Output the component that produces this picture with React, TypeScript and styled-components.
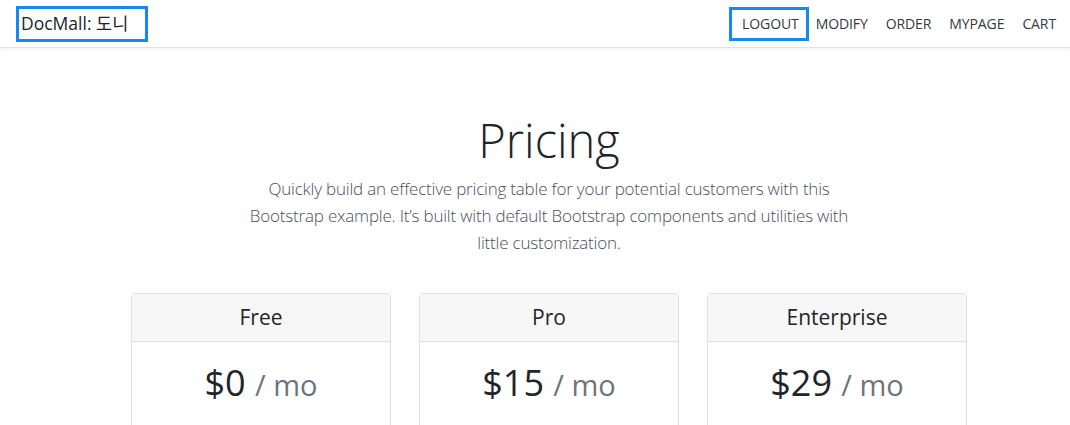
import React from "react";
import styled, {createGlobalStyle} from "styled-components";

let Global = createGlobalStyle`
  html, body {
    margin: 0;
    padding: 0;
    background: #fff;
    font-family: "Open Sans", "Noto Sans", "Noto Sans CJK KR", sans-serif;
    font-size: 14px;
    color: #212529;
    overflow: hidden;
  }
  * { box-sizing: border-box; }
`;

let Header = styled.header`
  display: flex;
  align-items: center;
  height: 48px;
  padding: 0 6px 0 16px;
  border-bottom: 1px solid #e3e3e3;
  box-shadow: 0 2px 3px rgba(0, 0, 0, 0.05);
  background: #fff;
`;
let Brand = styled.h5`
  margin: 0 auto 0 0;
  padding: 1px 17px 2px 2px;
  border: 3px solid #1589f0;
  font-size: 17.5px;
  font-weight: 400;
  line-height: 27px;
  color: #212529;
`;
let Nav = styled.nav`
  display: flex;
  align-items: center;
  gap: 2px;
`;
let NavLink = styled.a<{ boxed?: boolean }>`
  display: block;
  padding: ${p => p.boxed ? "5px 7px 5px 10px" : "7px 8px"};
  font-size: 14px;
  line-height: 18px;
  letter-spacing: -0.1px;
  color: #343a40;
  text-decoration: none;
  ${p => p.boxed ? "border: 3px solid #1589f0; margin-right: -3px;" : ""}
`;

let PricingHeader = styled.div`
  max-width: 610px;
  margin: 0 auto;
  padding: 64px 0 37px;
  text-align: center;
  transform: translateX(14px);
`;
let Title = styled.h1`
  margin: 0 0 7px;
  font-size: 47px;
  font-weight: 300;
  line-height: 1.2;
  color: #212529;
`;
let Lead = styled.p`
  margin: 0;
  font-size: 17px;
  font-weight: 300;
  line-height: 27px;
  letter-spacing: -0.2px;
  color: #4c4f5c;
`;

let Deck = styled.div`
  display: grid;
  grid-template-columns: repeat(3, 260px);
  gap: 28px;
  justify-content: center;
  transform: translateX(14px);
`;
let Card = styled.div`
  border: 1px solid #dfdfdf;
  border-radius: 4px;
  background: #fff;
  text-align: center;
  overflow: hidden;
`;
let CardHeader = styled.div`
  height: 48px;
  display: flex;
  align-items: center;
  justify-content: center;
  background: #f7f7f7;
  border-bottom: 1px solid #dfdfdf;
`;
let CardTitle = styled.h4`
  margin: 0;
  font-size: 21px;
  font-weight: 400;
  line-height: 25px;
`;
let CardBody = styled.div`
  padding: 19px 20px 20px;
`;
let Price = styled.h1`
  margin: 0;
  font-size: 36px;
  font-weight: 500;
  line-height: 1.2;
  color: #212529;
`;
let Per = styled.small`
  font-size: 29px;
  font-weight: 400;
  color: #6c757d;
`;
let Features = styled.ul`
  list-style: none;
  margin: 15px 0 0;
  padding: 0;
  font-size: 14px;
  line-height: 21px;
`;

let plans = [
    {name: "Free", price: 0, users: 10},
    {name: "Pro", price: 15, users: 20},
    {name: "Enterprise", price: 29, users: 30},
];

export default function App(): JSX.Element {
    return (<>
        <Global/>
        <Header>
            <Brand>DocMall: 도니</Brand>
            <Nav>
                <NavLink boxed href="#">LOGOUT</NavLink>
                <NavLink href="#">MODIFY</NavLink>
                <NavLink href="#">ORDER</NavLink>
                <NavLink href="#">MYPAGE</NavLink>
                <NavLink href="#">CART</NavLink>
            </Nav>
        </Header>
        <PricingHeader>
            <Title>Pricing</Title>
            <Lead>Quickly build an effective pricing table for your potential customers with this Bootstrap example. It’s built with default Bootstrap components and utilities with little customization.</Lead>
        </PricingHeader>
        <Deck>
            {plans.map(p => <Card key={p.name}>
                <CardHeader><CardTitle>{p.name}</CardTitle></CardHeader>
                <CardBody>
                    <Price>${p.price} <Per>/ mo</Per></Price>
                    <Features>
                        <li>{p.users} users included</li>
                        <li>{p.users / 5} GB of storage</li>
                        <li>Email support</li>
                        <li>Help center access</li>
                    </Features>
                </CardBody>
            </Card>)}
        </Deck>
    </>)
}
